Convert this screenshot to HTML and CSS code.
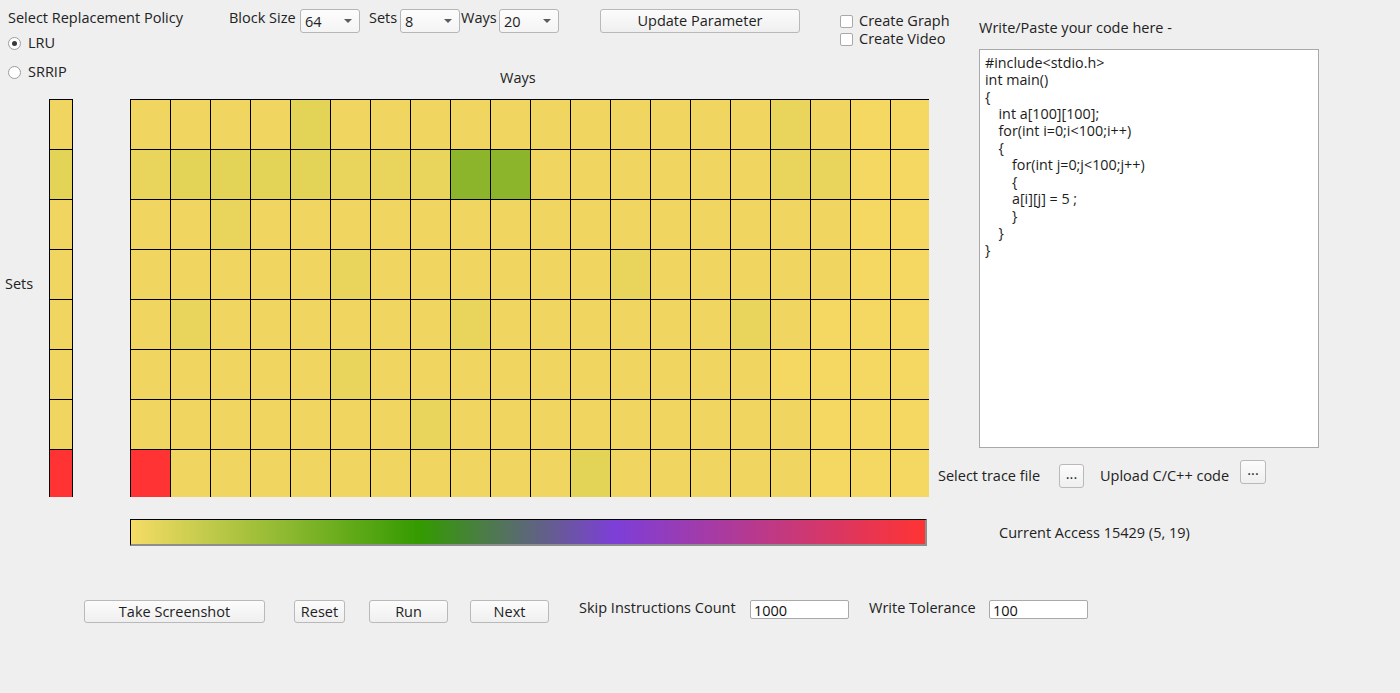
FILE: index.html
```html
<!DOCTYPE html>
<html>
<head>
<meta charset="utf-8">
<title>Cache Visualizer</title>
<link rel="stylesheet" href="styles.css">
</head>
<body>
<div class="app">
  <div class="main">
    <div class="left">
      <div class="top">
        <div class="policy">
          <div class="policy-title">Select Replacement Policy</div>
          <div class="radio checked"><span class="radio-dot"></span>LRU</div>
          <div class="radio second"><span class="radio-dot"></span>SRRIP</div>
        </div>
        <div class="top-right">
          <div class="controls">
            <span class="lbl lbl-block">Block Size</span>
            <div class="select"><span>64</span><i class="arrow"></i></div>
            <span class="lbl lbl-sets">Sets</span>
            <div class="select"><span>8</span><i class="arrow"></i></div>
            <span class="lbl lbl-ways">Ways</span>
            <div class="select"><span>20</span><i class="arrow"></i></div>
            <div class="btn btn-update">Update Parameter</div>
            <div class="checks">
              <div class="check"><span class="box"></span>Create Graph</div>
              <div class="check"><span class="box"></span>Create Video</div>
            </div>
          </div>
          <div class="ways-title">Ways</div>
        </div>
      </div>
      <div class="grid-row">
        <div class="sets-label">Sets</div>
        <div class="setbar">
          <span class="b"></span><span class="d"></span><span class="b"></span><span class="b"></span><span class="b"></span><span class="b"></span><span class="b"></span><span class="r"></span>
        </div>
        <div class="grid">
          <span class="b"></span><span class="b"></span><span class="b"></span><span class="b"></span><span class="d"></span><span class="b"></span><span class="b"></span><span class="b"></span><span class="b"></span><span class="b"></span><span class="b"></span><span class="b"></span><span class="b"></span><span class="b"></span><span class="b"></span><span class="b"></span><span class="m"></span><span class="b"></span><span class="l"></span><span class="l"></span>
          <span class="m"></span><span class="d"></span><span class="d"></span><span class="d"></span><span class="d"></span><span class="m"></span><span class="m"></span><span class="m"></span><span class="g"></span><span class="g"></span><span class="b"></span><span class="b"></span><span class="b"></span><span class="b"></span><span class="b"></span><span class="b"></span><span class="m"></span><span class="m"></span><span class="l"></span><span class="l"></span>
          <span class="b"></span><span class="b"></span><span class="m"></span><span class="b"></span><span class="b"></span><span class="b"></span><span class="b"></span><span class="b"></span><span class="b"></span><span class="b"></span><span class="b"></span><span class="b"></span><span class="b"></span><span class="b"></span><span class="b"></span><span class="b"></span><span class="b"></span><span class="b"></span><span class="l"></span><span class="l"></span>
          <span class="b"></span><span class="b"></span><span class="b"></span><span class="b"></span><span class="b"></span><span class="m"></span><span class="b"></span><span class="b"></span><span class="b"></span><span class="b"></span><span class="b"></span><span class="b"></span><span class="m"></span><span class="b"></span><span class="b"></span><span class="b"></span><span class="b"></span><span class="b"></span><span class="l"></span><span class="l"></span>
          <span class="b"></span><span class="m"></span><span class="b"></span><span class="b"></span><span class="b"></span><span class="b"></span><span class="b"></span><span class="b"></span><span class="m"></span><span class="b"></span><span class="b"></span><span class="b"></span><span class="b"></span><span class="b"></span><span class="b"></span><span class="m"></span><span class="b"></span><span class="l"></span><span class="l"></span><span class="l"></span>
          <span class="b"></span><span class="b"></span><span class="b"></span><span class="b"></span><span class="b"></span><span class="m"></span><span class="b"></span><span class="b"></span><span class="b"></span><span class="b"></span><span class="b"></span><span class="b"></span><span class="b"></span><span class="b"></span><span class="b"></span><span class="b"></span><span class="l"></span><span class="l"></span><span class="l"></span><span class="l"></span>
          <span class="b"></span><span class="b"></span><span class="b"></span><span class="b"></span><span class="b"></span><span class="b"></span><span class="b"></span><span class="m"></span><span class="b"></span><span class="b"></span><span class="b"></span><span class="b"></span><span class="b"></span><span class="b"></span><span class="b"></span><span class="b"></span><span class="b"></span><span class="l"></span><span class="l"></span><span class="l"></span>
          <span class="r"></span><span class="b"></span><span class="b"></span><span class="b"></span><span class="b"></span><span class="b"></span><span class="b"></span><span class="b"></span><span class="b"></span><span class="b"></span><span class="b"></span><span class="d"></span><span class="b"></span><span class="b"></span><span class="b"></span><span class="b"></span><span class="b"></span><span class="l"></span><span class="l"></span><span class="l"></span>
        </div>
      </div>
      <div class="gradient"></div>
    </div>
    <div class="right">
      <div class="code-title">Write/Paste your code here -</div>
      <div class="code">
        <div>#include&lt;stdio.h&gt;</div>
        <div>int main()</div>
        <div>{</div>
        <div class="i1">int a[100][100];</div>
        <div class="i1">for(int i=0;i&lt;100;i++)</div>
        <div class="i1">{</div>
        <div class="i2">for(int j=0;j&lt;100;j++)</div>
        <div class="i2">{</div>
        <div class="i2">a[i][j] = 5 ;</div>
        <div class="i2">}</div>
        <div class="i1">}</div>
        <div>}</div>
      </div>
      <div class="trace">
        <span class="trace-lbl1">Select trace file</span>
        <div class="btn btn-dots1">...</div>
        <span class="trace-lbl2">Upload C/C++ code</span>
        <div class="btn btn-dots2">...</div>
      </div>
      <div class="access">Current Access 15429 (5, 19)</div>
    </div>
  </div>
  <div class="bottom">
    <div class="btn btn-shot">Take Screenshot</div>
    <div class="btn btn-reset">Reset</div>
    <div class="btn btn-run">Run</div>
    <div class="btn btn-next">Next</div>
    <span class="bl bl-skip">Skip Instructions Count</span>
    <div class="input">1000</div>
    <span class="bl bl-write">Write Tolerance</span>
    <div class="input">100</div>
  </div>
</div>
</body>
</html>
```
FILE: styles.css
```css
* { box-sizing: border-box; }
html, body { margin: 0; padding: 0; }
body {
  background: #efefef;
  font-family: "Open Sans", "Noto Sans", sans-serif;
  font-size: 14.5px;
  line-height: 20px;
  color: #222;
  width: 1400px;
  height: 693px;
  overflow: hidden;
}
.app { width: 1400px; height: 693px; }
.main { display: flex; height: 598px; }
.left { width: 938px; flex: none; display: flex; flex-direction: column; }

/* top area */
.top { height: 99px; display: flex; align-items: flex-start; }
.policy { width: 229px; flex: none; padding-left: 8px; padding-top: 8px; display: flex; flex-direction: column; }
.policy-title { height: 20px; white-space: nowrap; }
.radio { display: flex; align-items: center; height: 20px; margin-top: 5px; }
.radio.second { margin-top: 9px; }
.radio-dot {
  width: 13px; height: 13px; border: 1px solid #9d9d9d; border-radius: 50%;
  background: #fff; margin-right: 7px; display: flex; align-items: center; justify-content: center;
}
.radio.checked .radio-dot::after {
  content: ""; width: 5px; height: 5px; border-radius: 50%; background: #3a3a3a;
}
.top-right { display: flex; flex-direction: column; flex: none; }
.controls { display: flex; align-items: flex-start; height: 50px; }
.controls > * { flex: none; }
.lbl { padding-top: 8px; white-space: nowrap; }
.lbl-block { width: 71px; }
.lbl-sets { width: 31px; margin-left: 9px; }
.lbl-ways { width: 38px; margin-left: 1px; }
.select {
  width: 60px; height: 24px; margin-top: 9px;
  border: 1px solid #b6b6b6; border-radius: 3px;
  background: linear-gradient(#fdfdfd, #f4f4f4);
  display: flex; align-items: center; padding-left: 4px; line-height: 20px;
}
.select span { padding-top: 1px; }
.arrow {
  margin-left: auto; margin-right: 7px; width: 0; height: 0;
  border-left: 4px solid transparent; border-right: 4px solid transparent; border-top: 4px solid #5c5c5c;
}
.btn {
  border: 1px solid #b9b9b9; border-radius: 3px;
  background: linear-gradient(#fcfcfc, #efefef);
  display: flex; align-items: center; justify-content: center;
  height: 24px; line-height: 20px; color: #1e1e1e; white-space: nowrap; flex: none;
}
.btn-update { width: 200px; margin-left: 41px; margin-top: 9px; }
.checks { margin-left: 40px; margin-top: 12px; display: flex; flex-direction: column; }
.check { display: flex; align-items: center; height: 18px; white-space: nowrap; }
.box {
  width: 13px; height: 13px; border: 1px solid #a9a9a9; border-radius: 2px;
  background: #fff; margin-right: 6px;
}
.ways-title { margin-top: 18px; padding-left: 271px; }

/* grid */
.grid-row { display: flex; align-items: flex-start; height: 398px; }
.grid-row > * { flex: none; }
.sets-label { width: 49px; padding-left: 5px; margin-top: 175px; }
.setbar {
  width: 24px; height: 398px; overflow: hidden;
  border-left: 1px solid #000; border-right: 1px solid #000;
  display: flex; flex-direction: column;
}
.setbar span { height: 50px; flex: none; border-top: 1px solid #000; }
.grid {
  margin-left: 57px; width: 799px; height: 398px; overflow: hidden;
  display: grid; grid-template-columns: repeat(20, 40px); grid-template-rows: repeat(8, 50px);
}
.grid span { border-left: 1px solid #000; border-top: 1px solid #000; }
.b { background: #f0d660; }
.l { background: #f5d862; }
.m { background: #e9d55c; }
.d { background: #e3d357; }
.g { background: #8db52b; }
.r { background: #ff3333; }

.gradient {
  margin-top: 22px; margin-left: 130px; width: 797px; height: 27px;
  border-top: 1px solid #000; border-left: 1px solid #000;
  border-right: 2px solid #8e8e8e; border-bottom: 2px solid #8e8e8e;
  background: linear-gradient(to right, #f5dc66 0%, #339a00 36.5%, #7d3ed8 61%, #ff3333 100%);
}

/* right */
.right { flex: 1; display: flex; flex-direction: column; }
.code-title { padding-left: 41px; margin-top: 18px; white-space: nowrap; }
.code {
  margin-left: 41px; margin-top: 11px; width: 340px; height: 399px;
  background: #fff; border: 1px solid #a9a9a9;
  padding: 4px 0 0 5px; font-size: 14.3px; line-height: 17px; color: #1c1c1c;
}
.code div { white-space: pre; }
.code .i1 { padding-left: 13.5px; }
.code .i2 { padding-left: 27px; }
.trace { display: flex; align-items: flex-start; margin-top: 12px; }
.trace > * { flex: none; }
.trace-lbl1 { width: 121px; margin-top: 6px; white-space: nowrap; }
.btn-dots1 { width: 25px; margin-top: 4px; padding-bottom: 4px; }
.trace-lbl2 { width: 140px; margin-left: 16px; margin-top: 6px; white-space: nowrap; }
.btn-dots2 { width: 26px; padding-bottom: 4px; }
.access { margin-top: 35px; padding-left: 61px; white-space: nowrap; }

/* bottom */
.bottom { display: flex; align-items: flex-start; height: 40px; }
.bottom > * { flex: none; }
.bottom .btn { height: 23px; margin-top: 2px; }
.btn-shot { margin-left: 84px; width: 181px; }
.btn-reset { margin-left: 29px; width: 51px; }
.btn-run { margin-left: 24px; width: 79px; }
.btn-next { margin-left: 22px; width: 79px; }
.bl { white-space: nowrap; }
.bl-skip { margin-left: 30px; width: 171px; }
.bl-write { margin-left: 20px; width: 120px; }
.input {
  width: 99px; height: 19px; margin-top: 2px;
  background: #fff; border: 1px solid #a9a9a9; border-radius: 2px;
  padding-left: 3px; line-height: 19px; color: #111;
}
```
